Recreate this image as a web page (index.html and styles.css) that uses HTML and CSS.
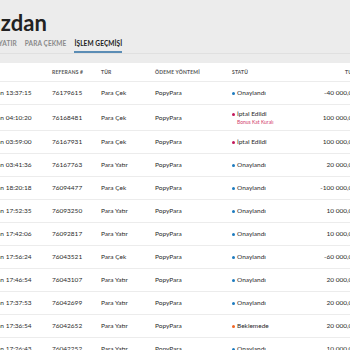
FILE: index.html
```html
<!DOCTYPE html>
<html lang="tr">

<head>
  <meta charset="UTF-8">
  <meta name="viewport" content="width=device-width, initial-scale=1.0">
  <title>Cüzdan</title>
  <link rel="stylesheet" href="styles.css">
</head>

<body>
  <div class="page">
    <div class="top">
      <h1 class="title">Cüzdan</h1>
      <div class="tabs">
        <a class="tab">PARA YATIR</a>
        <a class="tab">PARA ÇEKME</a>
        <a class="tab active">İŞLEM GEÇMİŞİ</a>
      </div>
    </div>

    <div class="content">
      <div class="table">
        <div class="row head">
          <div>ZAMAN</div>
          <div>REFERANS #</div>
          <div>TÜR</div>
          <div>ÖDEME YÖNTEMİ</div>
          <div>STATÜ</div>
          <div class="amount">TUTAR</div>
        </div>

        <div class="row">
          <div>12 Haziran 13:37:15</div>
          <div>76179615</div>
          <div>Para Çek</div>
          <div>PopyPara</div>
          <div class="status ok">Onaylandı</div>
          <div class="amount">-40 000,00</div>
        </div>
        <div class="row">
          <div>12 Haziran 04:10:20</div>
          <div>76168481</div>
          <div>Para Çek</div>
          <div>PopyPara</div>
          <div class="status cancel">İptal Edildi<span class="note">Bonus Kat Kuralı</span></div>
          <div class="amount">100 000,00</div>
        </div>
        <div class="row">
          <div>12 Haziran 03:59:00</div>
          <div>76167931</div>
          <div>Para Çek</div>
          <div>PopyPara</div>
          <div class="status cancel">İptal Edildi</div>
          <div class="amount">100 000,00</div>
        </div>
        <div class="row">
          <div>12 Haziran 03:41:36</div>
          <div>76167763</div>
          <div>Para Yatır</div>
          <div>PopyPara</div>
          <div class="status ok">Onaylandı</div>
          <div class="amount">20 000,00</div>
        </div>
        <div class="row">
          <div>11 Haziran 18:20:18</div>
          <div>76094477</div>
          <div>Para Çek</div>
          <div>PopyPara</div>
          <div class="status ok">Onaylandı</div>
          <div class="amount">-100 000,00</div>
        </div>
        <div class="row">
          <div>11 Haziran 17:52:35</div>
          <div>76093250</div>
          <div>Para Yatır</div>
          <div>PopyPara</div>
          <div class="status ok">Onaylandı</div>
          <div class="amount">10 000,00</div>
        </div>
        <div class="row">
          <div>11 Haziran 17:42:06</div>
          <div>76092817</div>
          <div>Para Yatır</div>
          <div>PopyPara</div>
          <div class="status ok">Onaylandı</div>
          <div class="amount">10 000,00</div>
        </div>
        <div class="row">
          <div>10 Haziran 17:56:24</div>
          <div>76043521</div>
          <div>Para Çek</div>
          <div>PopyPara</div>
          <div class="status ok">Onaylandı</div>
          <div class="amount">-60 000,00</div>
        </div>
        <div class="row">
          <div>10 Haziran 17:46:54</div>
          <div>76043107</div>
          <div>Para Yatır</div>
          <div>PopyPara</div>
          <div class="status ok">Onaylandı</div>
          <div class="amount">20 000,00</div>
        </div>
        <div class="row">
          <div>10 Haziran 17:37:53</div>
          <div>76042699</div>
          <div>Para Yatır</div>
          <div>PopyPara</div>
          <div class="status ok">Onaylandı</div>
          <div class="amount">20 000,00</div>
        </div>
        <div class="row">
          <div>10 Haziran 17:36:54</div>
          <div>76042652</div>
          <div>Para Yatır</div>
          <div>PopyPara</div>
          <div class="status wait">Beklemede</div>
          <div class="amount">20 000,00</div>
        </div>
        <div class="row">
          <div>10 Haziran 17:26:43</div>
          <div>76042252</div>
          <div>Para Yatır</div>
          <div>PopyPara</div>
          <div class="status ok">Onaylandı</div>
          <div class="amount">10 000,00</div>
        </div>
      </div>
    </div>
  </div>
</body>

</html>
```

FILE: styles.css
```css
body {
  margin: 0;
  overflow: hidden;
  background-color: #ffffff;
  font-family: "Lato", "Noto Sans", sans-serif;
  color: #2b2b2b;
}

.page {
  width: 420px;
  margin-left: -30px;
}

.top {
  background-color: #ececec;
  padding: 11px 0 0 10px;
  border-bottom: 1px solid #e0e0e0;
}

.title {
  margin: 0 0 0 -6px;
  font-size: 22px;
  line-height: 24px;
  font-weight: 700;
  color: #222222;
}

.tabs {
  display: flex;
  gap: 8px;
  margin-top: 1px;
}

.tab {
  font-size: 6.5px;
  line-height: 8px;
  font-weight: 700;
  letter-spacing: 0.1px;
  color: #8a8a8a;
  padding: 4px 0 3px;
  border-bottom: 2px solid transparent;
}

.tab.active {
  color: #222222;
  border-bottom-color: #5b8db5;
}

.content {
  background-color: #ececec;
  padding-top: 9px;
}

.table {
  background-color: #ffffff;
}

.row {
  display: grid;
  grid-template-columns: 82px 49px 54px 77px 70px 1fr;
  align-items: center;
  min-height: 23px;
  box-sizing: border-box;
  padding: 5px 34px 5px 0;
  border-bottom: 1px solid #ececec;
  font-size: 6.5px;
  line-height: 8px;
}

.row > div:first-child {
  padding-left: 3px;
}

.row.head {
  min-height: 17px;
  font-size: 5px;
  font-weight: 700;
  color: #555555;
  letter-spacing: 0.2px;
}

.row.head .amount {
  margin-right: -6px;
}

.amount {
  text-align: right;
}

.status {
  position: relative;
  padding-left: 5px;
}

.status::before {
  content: "";
  position: absolute;
  left: 0;
  top: 2.5px;
  width: 3px;
  height: 3px;
  border-radius: 50%;
}

.status.ok::before {
  background-color: #1d7bbf;
}

.status.cancel::before {
  background-color: #c2185b;
}

.status.wait::before {
  background-color: #f26522;
}

.note {
  display: block;
  margin-top: 1px;
  font-size: 5px;
  line-height: 6px;
  color: #d23c6c;
}
```
